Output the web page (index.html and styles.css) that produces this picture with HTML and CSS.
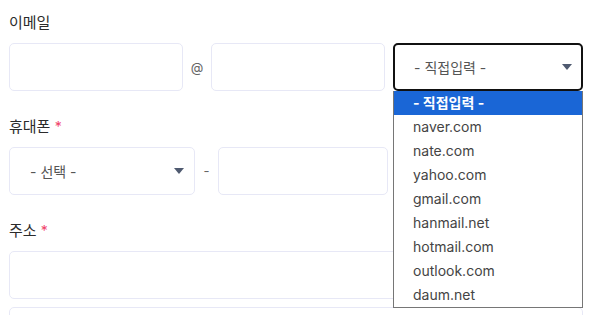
FILE: index.html
```html
<!DOCTYPE html>
<html lang="ko">

<head>
    <meta charset="UTF-8">
    <meta name="viewport" content="width=device-width, initial-scale=1.0">
    <title>회원정보 입력</title>
    <link rel="stylesheet" href="styles.css">
</head>

<body>
    <form class="form">
        <div class="field">
            <label class="label">이메일</label>
            <div class="row email-row">
                <input class="input" type="text">
                <span class="sep">@</span>
                <input class="input" type="text">
                <div class="select-wrap">
                    <div class="select focused">
                        <span>- 직접입력 -</span>
                        <span class="arrow"></span>
                    </div>
                    <ul class="options">
                        <li class="selected">- 직접입력 -</li>
                        <li>naver.com</li>
                        <li>nate.com</li>
                        <li>yahoo.com</li>
                        <li>gmail.com</li>
                        <li>hanmail.net</li>
                        <li>hotmail.com</li>
                        <li>outlook.com</li>
                        <li>daum.net</li>
                    </ul>
                </div>
            </div>
        </div>

        <div class="field">
            <label class="label">휴대폰 <span class="req">*</span></label>
            <div class="row phone-row">
                <div class="select">
                    <span>- 선택 -</span>
                    <span class="arrow"></span>
                </div>
                <span class="sep">-</span>
                <input class="input" type="text">
                <span class="sep">-</span>
                <input class="input" type="text">
            </div>
        </div>

        <div class="field">
            <label class="label">주소 <span class="req">*</span></label>
            <div class="stack">
                <input class="input" type="text">
                <input class="input" type="text">
            </div>
        </div>
    </form>
</body>

</html>
```

FILE: styles.css
```css
body {
    margin: 0;
    padding: 0;
    font-family: Inter, "Noto Sans CJK KR", sans-serif;
    color: #222;
    background: #fff;
    overflow: hidden;
}

.form {
    width: 574px;
    padding: 11px 0 0 9px;
}

.field {
    margin-bottom: 24px;
}

.label {
    display: block;
    font-size: 15px;
    line-height: 24px;
    margin-bottom: 8px;
    color: #2b2b2b;
}

.req {
    color: #f0436a;
    font-size: 14px;
}

.row {
    display: flex;
    align-items: center;
}

.input {
    box-sizing: border-box;
    height: 48px;
    border: 1px solid #e7e8f6;
    border-radius: 5px;
    background: #fff;
    font: inherit;
    margin: 0;
    min-width: 0;
}

.sep {
    text-align: center;
    color: #666;
    font-size: 13px;
}

.email-row .input {
    width: 174px;
}

.email-row .sep {
    width: 28px;
}

.select-wrap {
    position: relative;
    margin-left: 8px;
    width: 190px;
}

.select {
    box-sizing: border-box;
    height: 48px;
    border: 1px solid #e7e8f6;
    border-radius: 5px;
    display: flex;
    align-items: center;
    justify-content: space-between;
    padding: 0 10px 0 20px;
    font-size: 14px;
    color: #555;
}

.select.focused {
    border: 2px solid #111;
    padding-left: 19px;
    padding-right: 9px;
}

.arrow {
    width: 0;
    height: 0;
    border-left: 5px solid transparent;
    border-right: 5px solid transparent;
    border-top: 6px solid #4f5a70;
}

.options {
    position: absolute;
    top: 48px;
    left: 0;
    width: 190px;
    box-sizing: border-box;
    margin: 0;
    padding: 0;
    list-style: none;
    background: #fff;
    border: 1px solid #767676;
    border-top: none;
    z-index: 2;
}

.options li {
    height: 24px;
    line-height: 24px;
    padding-left: 19px;
    font-size: 14px;
    color: #444;
}

.options li.selected {
    background: #1a66d6;
    color: #fff;
    font-weight: bold;
}

.phone-row .select {
    width: 186px;
}

.phone-row .sep {
    width: 23px;
}

.phone-row .input {
    width: 170px;
}

.stack {
    display: flex;
    flex-direction: column;
    gap: 8px;
}

.stack .input {
    width: 100%;
}
```
